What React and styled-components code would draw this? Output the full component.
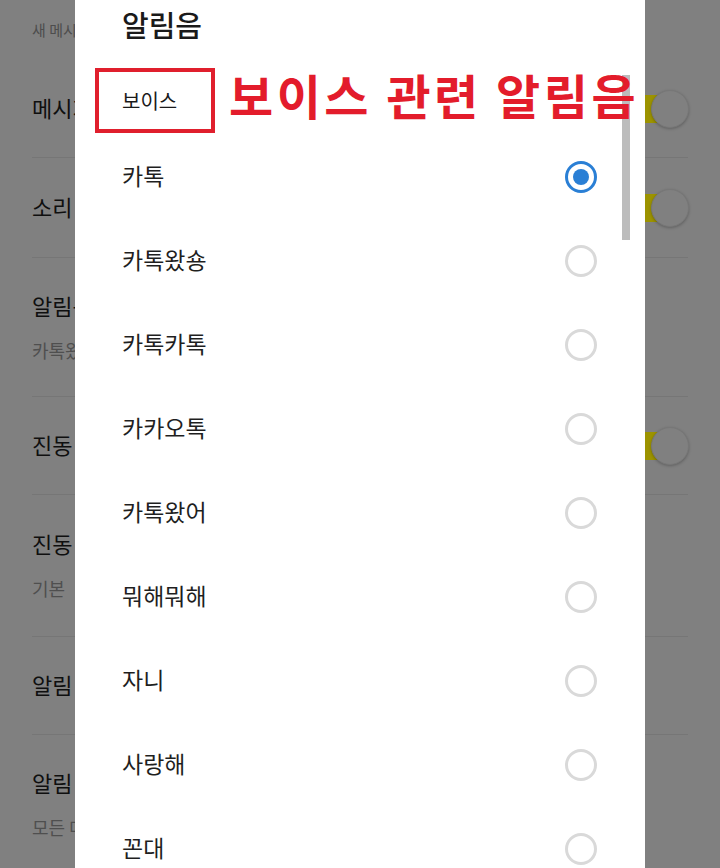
import React from 'react';
import styled, { createGlobalStyle } from 'styled-components';

const GlobalStyle = createGlobalStyle`
  html, body {
    margin: 0;
    padding: 0;
    background: #808080;
    font-family: "Noto Sans CJK KR", "Noto Sans", sans-serif;
  }
  * { box-sizing: border-box; }
`;

const settings = [
  { id: 1, title: '메시지 알림', toggle: true, h: 98 },
  { id: 2, title: '소리', toggle: true, h: 100 },
  { id: 3, title: '알림음', sub: '카톡왔숑', h: 139 },
  { id: 4, title: '진동', toggle: true, h: 98 },
  { id: 5, title: '진동 패턴', sub: '기본', h: 142 },
  { id: 6, title: '알림 센터에 표시', h: 98 },
  { id: 7, title: '알림 미리보기', sub: '모든 메시지', h: 140 },
];

const sounds = ['카톡', '카톡왔숑', '카톡카톡', '카카오톡', '카톡왔어', '뭐해뭐해', '자니', '사랑해', '꼰대'];

const Screen = styled.div`
  position: relative;
  width: 720px;
  height: 868px;
  overflow: hidden;
  background: #808080;
`;

const Settings = styled.div`
  padding: 0 32px;
  display: flex;
  flex-direction: column;
`;

const GroupLabel = styled.div`
  height: 60px;
  display: flex;
  align-items: center;
  font-size: 15px;
  color: #4d4d4d;
  padding-bottom: 2px;
`;

const Row = styled.div`
  height: ${p => p.$h}px;
  display: flex;
  align-items: center;
  justify-content: space-between;
  border-bottom: 1px solid #767676;
`;

const RowText = styled.div`
  display: flex;
  flex-direction: column;
  gap: 18px;
  margin-top: -3px;
`;

const RowTitle = styled.div`
  font-size: 22px;
  color: #0f0f0f;
  line-height: 30px;
`;

const RowSub = styled.div`
  font-size: 18px;
  color: #4f4f4f;
  line-height: 24px;
`;

const Toggle = styled.div`
  position: relative;
  width: 70px;
  height: 40px;
  margin-right: -1px;
  display: flex;
  align-items: center;
  justify-content: flex-end;
`;

const Track = styled.div`
  width: 60px;
  height: 28px;
  border-radius: 14px;
  background: #9c9300;
  margin-right: 10px;
`;

const Knob = styled.div`
  position: absolute;
  right: 0;
  top: 1px;
  width: 38px;
  height: 38px;
  border-radius: 50%;
  background: #808080;
  box-shadow: 0 1px 3px rgba(0, 0, 0, 0.25);
  border: 1px solid #777;
`;

const Dialog = styled.div`
  position: absolute;
  left: 75px;
  top: 0;
  bottom: 0;
  width: 570px;
  background: #ffffff;
  padding: 0 48px 0 47px;
`;

const Title = styled.div`
  height: 50px;
  line-height: 48px;
  font-size: 29px;
  font-weight: 500;
  color: #1a1a1a;
`;

const SectionHeader = styled.div`
  position: relative;
  height: 85px;
  padding-top: 38px;
  font-size: 20px;
  line-height: 26px;
  color: #1a1a1a;
`;

const MarkBox = styled.div`
  position: absolute;
  left: -27px;
  top: 18px;
  width: 120px;
  height: 65px;
  border: 4px solid #e01f2d;
`;

const Item = styled.div`
  height: 84px;
  display: flex;
  align-items: center;
  justify-content: space-between;
`;

const ItemLabel = styled.div`
  font-size: 23px;
  line-height: 30px;
  margin-top: -4px;
  color: #1f1f1f;
`;

const Radio = styled.div`
  width: 32px;
  height: 32px;
  border-radius: 50%;
  border: 3px solid ${p => (p.$on ? '#2a7fd5' : '#d9d9d9')};
  display: flex;
  align-items: center;
  justify-content: center;
  &::after {
    content: '';
    width: 16px;
    height: 16px;
    border-radius: 50%;
    background: ${p => (p.$on ? '#2a7fd5' : 'transparent')};
  }
`;

const ScrollThumb = styled.div`
  position: absolute;
  left: 547px;
  top: 75px;
  width: 8px;
  height: 165px;
  background: #bcbcbc;
`;

const Annotation = styled.div`
  position: absolute;
  left: 229px;
  top: 68px;
  font-size: 48px;
  line-height: 52px;
  font-weight: 700;
  color: #e31c2b;
  letter-spacing: 3.5px;
  white-space: nowrap;
`;

function App() {
  return (
    <>
      <GlobalStyle />
      <Screen>
        <Settings>
          <GroupLabel>새 메시지 알림</GroupLabel>
          {settings.map(s => (
            <Row key={s.id} $h={s.h}>
              <RowText>
                <RowTitle>{s.title}</RowTitle>
                {s.sub && <RowSub>{s.sub}</RowSub>}
              </RowText>
              {s.toggle && (
                <Toggle>
                  <Track />
                  <Knob />
                </Toggle>
              )}
            </Row>
          ))}
        </Settings>

        <Dialog>
          <Title>알림음</Title>
          <SectionHeader>
            보이스
            <MarkBox />
          </SectionHeader>
          {sounds.map((name, i) => (
            <Item key={name}>
              <ItemLabel>{name}</ItemLabel>
              <Radio $on={i === 0} />
            </Item>
          ))}
          <ScrollThumb />
        </Dialog>

        <Annotation>보이스 관련 알림음</Annotation>
      </Screen>
    </>
  );
}

export default App;
